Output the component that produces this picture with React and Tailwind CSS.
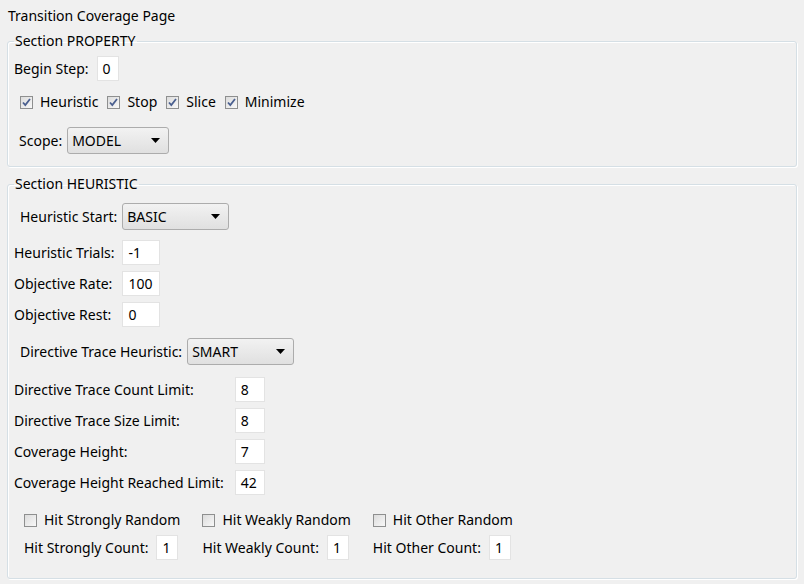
const Input = ({ value, w }) => (
  <div
    className={`h-[25px] ${w} bg-white border border-[#e3e3e3] flex items-center px-[5px] text-black`}
  >
    {value}
  </div>
);

const Combo = ({ value, w }) => (
  <div
    className={`h-[27px] ${w} rounded-[3px] border border-[#acacac] bg-gradient-to-b from-[#f2f2f2] to-[#e0e0e0] flex items-center justify-between pl-[4px] pr-[8px]`}
  >
    <span>{value}</span>
    <svg width="9" height="5" viewBox="0 0 9 5">
      <path d="M0 0h9L4.5 5z" fill="#000" />
    </svg>
  </div>
);

const Check = ({ checked, label }) => (
  <div className="flex items-center gap-[7px]">
    <span className="w-[13px] h-[13px] border border-[#8e8f8f] bg-gradient-to-br from-[#dcdcdc] to-[#f8f8f8] flex items-center justify-center">
      {checked && (
        <svg width="9" height="9" viewBox="0 0 9 9">
          <path d="M1 4.5l2.3 2.6L8 1" fill="none" stroke="#4a5f8f" strokeWidth="1.8" />
        </svg>
      )}
    </span>
    <span>{label}</span>
  </div>
);

const Group = ({ title, children, className = "" }) => (
  <fieldset
    className={`mx-[7px] border border-[#d5dfe5] rounded-[3px] shadow-[inset_1px_1px_0_#fff,1px_1px_0_#fff] px-[6px] ${className}`}
  >
    <legend className="px-[1px] leading-[16px]">{title}</legend>
    {children}
  </fieldset>
);

export default function App() {
  return (
    <div className="w-[804px] h-[584px] bg-[#f0f0f0] text-black text-[14px] leading-[16px] font-['Noto_Sans',sans-serif] overflow-hidden">
      <div className="pl-[8px] pt-[8px]">Transition Coverage Page</div>

      <Group title="Section PROPERTY" className="mt-[9px] pb-[12px]">
        <div className="flex items-center gap-[8px] mt-[7px]">
          <span>Begin Step:</span>
          <Input value="0" w="w-[22px]" />
        </div>
        <div className="flex items-center gap-[9px] mt-[14px] pl-[6px] h-[14px]">
          <Check checked label="Heuristic" />
          <Check checked label="Stop" />
          <Check checked label="Slice" />
          <Check checked label="Minimize" />
        </div>
        <div className="flex items-center gap-[5px] mt-[18px] pl-[5px]">
          <span>Scope:</span>
          <Combo value="MODEL" w="w-[102px]" />
        </div>
      </Group>

      <Group title="Section HEURISTIC" className="mt-[9px] h-[403px]">
        <div className="flex items-center gap-[5px] mt-[11px] pl-[6px]">
          <span>Heuristic Start:</span>
          <Combo value="BASIC" w="w-[107px]" />
        </div>
        <div className="grid grid-cols-[auto_auto] justify-start items-center gap-x-[8px] gap-y-[6px] mt-[10px]">
          <span>Heuristic Trials:</span>
          <Input value="-1" w="w-[38px]" />
          <span>Objective Rate:</span>
          <Input value="100" w="w-[38px]" />
          <span>Objective Rest:</span>
          <Input value="0" w="w-[38px]" />
        </div>
        <div className="flex items-center gap-[5px] mt-[11px] pl-[6px]">
          <span>Directive Trace Heuristic:</span>
          <Combo value="SMART" w="w-[107px]" />
        </div>
        <div className="grid grid-cols-[auto_auto] justify-start items-center gap-x-[11px] gap-y-[6px] mt-[12px]">
          <span>Directive Trace Count Limit:</span>
          <Input value="8" w="w-[30px]" />
          <span>Directive Trace Size Limit:</span>
          <Input value="8" w="w-[30px]" />
          <span>Coverage Height:</span>
          <Input value="7" w="w-[30px]" />
          <span>Coverage Height Reached Limit:</span>
          <Input value="42" w="w-[30px]" />
        </div>
        <div className="grid grid-cols-[auto_auto_auto] justify-start items-center gap-x-[22px] gap-y-[7px] mt-[17px] pl-[10px]">
          <Check label="Hit Strongly Random" />
          <Check label="Hit Weakly Random" />
          <Check label="Hit Other Random" />
          <div className="flex items-center gap-[8px]">
            <span>Hit Strongly Count:</span>
            <Input value="1" w="w-[22px]" />
          </div>
          <div className="flex items-center gap-[8px]">
            <span>Hit Weakly Count:</span>
            <Input value="1" w="w-[22px]" />
          </div>
          <div className="flex items-center gap-[8px]">
            <span>Hit Other Count:</span>
            <Input value="1" w="w-[22px]" />
          </div>
        </div>
      </Group>
    </div>
  );
}
